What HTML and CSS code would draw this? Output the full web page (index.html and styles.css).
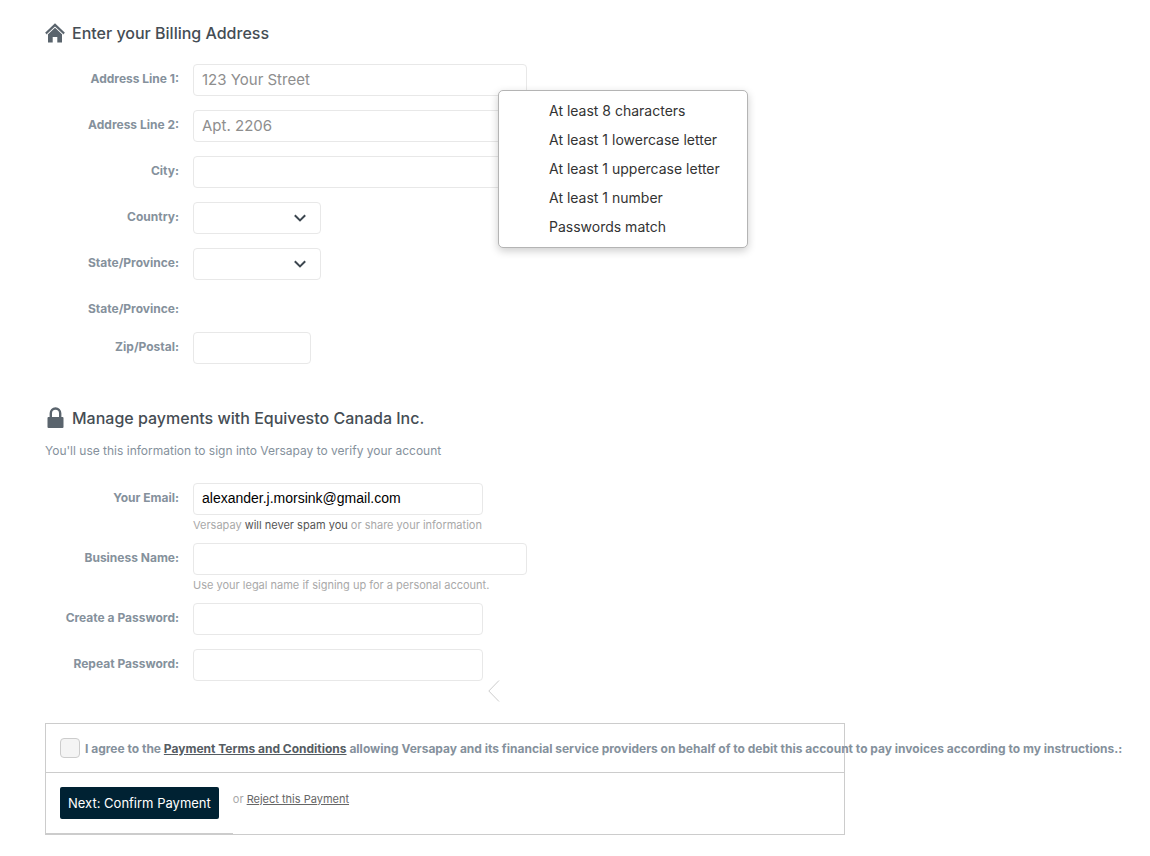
FILE: index.html
```html
<!DOCTYPE html>
<html lang="en">
<head>
    <meta charset="utf-8">
    <title>Billing Address</title>
    <link rel="stylesheet" href="styles.css">
</head>
<body>

<form class="container">
    <h2>
        <svg class="icon" viewBox="0 0 20 20" width="20" height="20" aria-hidden="true">
            <path d="M1 10.6 L10 2 L19 10.6" fill="none" stroke="#5a646d" stroke-width="2.6"/>
            <path d="M3 11.3 L10 4.7 L17 11.3 V19.5 H12.3 V14 H7.7 V19.5 H3 Z" fill="#5a646d"/>
            <path d="M2 11.4 L10 3.9 L18 11.4" fill="none" stroke="#fff" stroke-width="0.8"/>
        </svg>
        Enter your Billing Address
    </h2>

    <div class="fields">
        <div class="row">
            <label for="address1">Address Line 1:</label>
            <input type="text" id="address1" class="wide" placeholder="123 Your Street">
        </div>
        <div class="row">
            <label for="address2">Address Line 2:</label>
            <input type="text" id="address2" class="wide" placeholder="Apt. 2206">
        </div>
        <div class="row">
            <label for="city">City:</label>
            <input type="text" id="city" class="wide">
        </div>
        <div class="row">
            <label for="country">Country:</label>
            <div class="select-box">
                <select id="country"><option></option></select>
                <svg class="chevron" viewBox="0 0 12 8" width="12" height="8" aria-hidden="true"><path d="M0.8 1.2 L6 6.4 L11.2 1.2"/></svg>
            </div>
        </div>
        <div class="row">
            <label for="province">State/Province:</label>
            <div class="select-box">
                <select id="province"><option></option></select>
                <svg class="chevron" viewBox="0 0 12 8" width="12" height="8" aria-hidden="true"><path d="M0.8 1.2 L6 6.4 L11.2 1.2"/></svg>
            </div>
        </div>
        <div class="row row-empty">
            <span class="label">State/Province:</span>
        </div>
        <div class="row">
            <label for="zip">Zip/Postal:</label>
            <input type="text" id="zip" class="small">
        </div>
    </div>

    <h2 class="account">
        <svg class="icon" viewBox="0 0 20 22" width="20" height="22" aria-hidden="true">
            <path d="M5.8 11 V6.2 a4.7 4.7 0 0 1 9.4 0 V11" fill="none" stroke="#5a646d" stroke-width="2.4"/>
            <rect x="2.5" y="10" width="16" height="11" rx="1" fill="#5a646d"/>
        </svg>
        Manage payments with Equivesto Canada Inc.
    </h2>
    <p class="intro">You'll use this information to sign into Versapay to verify your account</p>

    <div class="fields">
        <div class="row">
            <label for="email">Your Email:</label>
            <div class="field">
                <input type="email" id="email" class="medium email" value="alexander.j.morsink@gmail.com">
                <p class="hint">Versapay <span>will never spam you</span> or share your information</p>
            </div>
        </div>
        <div class="row">
            <label for="business">Business Name:</label>
            <div class="field">
                <input type="text" id="business" class="wide">
                <p class="hint">Use your legal name if signing up for a personal account.</p>
            </div>
        </div>
        <div class="row">
            <label for="password">Create a Password:</label>
            <input type="password" id="password" class="medium">
        </div>
        <div class="row">
            <label for="repeat">Repeat Password:</label>
            <div class="repeat-box">
                <input type="password" id="repeat" class="medium">
                <svg class="pointer" viewBox="0 0 12 22" width="12" height="22" aria-hidden="true"><path d="M11 0.5 L0.8 11 L11 21.5"/></svg>
            </div>
        </div>
    </div>

    <div class="confirm">
        <div class="agree">
            <input type="checkbox" id="agree">
            <label for="agree">I agree to the <a href="#">Payment Terms and Conditions</a> allowing Versapay and its financial service providers on behalf of to debit this account to pay invoices according to my instructions.:</label>
        </div>
        <div class="actions">
            <div class="next">
                <button type="submit">Next: Confirm Payment</button>
            </div>
            <span class="reject">or <a href="#">Reject this Payment</a></span>
        </div>
    </div>

    <!-- password rules -->
    <ul class="rules">
        <li>At least 8 characters</li>
        <li>At least 1 lowercase letter</li>
        <li>At least 1 uppercase letter</li>
        <li>At least 1 number</li>
        <li>Passwords match</li>
    </ul>
</form>

</body>
</html>
```
FILE: styles.css
```css
body {
    font-family: Inter, sans-serif;
    margin: 0;
    background-color: #fff;
    color: #85919c;
}
.container {
    position: relative;
    max-width: 800px;
    margin-left: 45px;
    padding-top: 22px;
    padding-bottom: 20px;
}
h2 {
    display: flex;
    align-items: center;
    gap: 7px;
    height: 22px;
    margin: 0 0 20px;
    font-size: 16px;
    font-weight: 500;
    color: #454d54;
}
h2.account {
    margin: 43px 0 12px;
}
.intro {
    margin: 0 0 22px;
    font-size: 12px;
    line-height: 20px;
}
.fields {
    display: flex;
    flex-direction: column;
    gap: 14px;
}
.row {
    display: flex;
    align-items: flex-start;
    gap: 14px;
}
.row label, .row .label {
    width: 134px;
    text-align: right;
    font-size: 12px;
    font-weight: 700;
    line-height: 30px;
}
.row-empty {
    height: 24px;
}
input, select {
    display: block;
    box-sizing: border-box;
    height: 32px;
    margin: 0;
    padding: 0 8px 2px;
    border: 1px solid #e8e8e8;
    border-radius: 4px;
    background-color: #fff;
    color: #000;
    font-family: Inter, sans-serif;
    font-size: 15px;
}
input::placeholder {
    color: #8e8e8e;
}
.wide {
    width: 334px;
}
.medium {
    width: 290px;
}
.small {
    width: 118px;
}
.email {
    font-family: "Liberation Sans", Arial, sans-serif;
    font-size: 14px;
}
.select-box, .repeat-box {
    position: relative;
}
select {
    width: 128px;
    appearance: none;
}
.chevron {
    position: absolute;
    right: 15px;
    top: 12px;
    pointer-events: none;
}
.chevron path {
    fill: none;
    stroke: #3c464f;
    stroke-width: 2;
}
.pointer {
    position: absolute;
    left: 295px;
    top: 31px;
}
.pointer path {
    fill: none;
    stroke: #ccc;
}
.hint {
    margin: 0;
    height: 14px;
    font-size: 11px;
    line-height: 20px;
    color: #a9a9a9;
}
.hint span {
    color: #555;
}
.confirm {
    margin-top: 42px;
    border: 1px solid #ccc;
}
.agree {
    display: flex;
    align-items: center;
    gap: 5px;
    height: 48px;
    padding-left: 14px;
    border-bottom: 1px solid #ccc;
    white-space: nowrap;
    font-size: 12px;
    font-weight: 700;
}
.agree a {
    color: #555c62;
}
.agree input {
    flex: none;
    width: 20px;
    height: 20px;
    padding: 0;
    appearance: none;
    background-color: #f4f4f4;
    border-color: #ccc;
}
.actions {
    display: flex;
    align-items: flex-start;
}
.next {
    padding: 14px;
    border-bottom: 1px solid #ccc;
}
button {
    display: block;
    height: 32px;
    padding: 0 8px;
    border: none;
    border-radius: 2px;
    background-color: #002233;
    color: #fff;
    font-family: Inter, sans-serif;
    font-size: 13px;
    font-weight: 400;
    cursor: pointer;
}
.reject {
    padding-top: 16px;
    font-size: 11px;
    line-height: 20px;
    color: #a9a9a9;
}
.reject a {
    color: #666;
}
.rules {
    position: absolute;
    left: 453px;
    top: 90px;
    box-sizing: border-box;
    width: 250px;
    margin: 0;
    padding: 5px 0 6px 50px;
    border: 1px solid #b4b4b4;
    border-radius: 5px;
    background-color: #fff;
    box-shadow: 0 3px 8px rgba(0, 0, 0, 0.2);
    list-style: none;
    font-size: 14px;
    line-height: 29px;
    color: #333;
}
```
